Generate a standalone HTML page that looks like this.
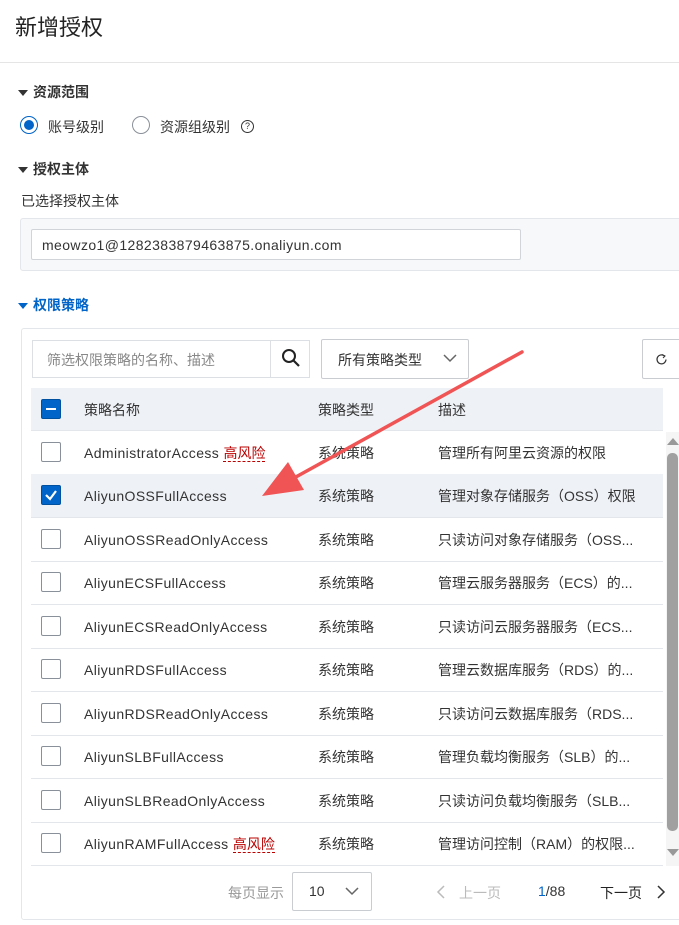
<!DOCTYPE html>
<html><head><meta charset="utf-8"><style>
*{box-sizing:border-box;margin:0;padding:0}
body{width:679px;height:925px;overflow:hidden;background:#fff;font-family:"Liberation Sans","Noto Sans CJK SC",sans-serif;color:#333;position:relative;font-size:14px}
.a{position:absolute}
.sec{font-weight:bold;font-size:14px;color:#333}
.tri{display:inline-block;width:0;height:0;border-left:5px solid transparent;border-right:5px solid transparent;border-top:6px solid #333;margin-right:5px;vertical-align:middle}
.row{position:absolute;left:31px;width:632px;height:44px;border-bottom:1px solid #e3e6ea;font-size:14px;color:#333}
.row span{position:absolute;top:12px;line-height:20px}
.en{letter-spacing:0.4px}
.cb{position:absolute;left:10px;top:11px;width:20px;height:20px;border:1px solid #8a9099;border-radius:2px;background:#fff}
.risk{color:#b00;border-bottom:1px dashed #b00;font-weight:normal;letter-spacing:0}
</style></head><body>
<div class="a" style="left:15px;top:10px;font-size:22px;color:#222">新增授权</div>
<div class="a" style="left:0;top:62px;width:679px;height:1px;background:#e5e5e5"></div>

<div class="a sec" style="left:18px;top:82px"><span class="tri"></span>资源范围</div>
<div class="a" style="left:20px;top:116px;width:18px;height:18px;border:1px solid #0064c8;border-radius:50%"><div style="margin:3px;width:10px;height:10px;border-radius:50%;background:#0064c8"></div></div>
<div class="a" style="left:48px;top:117px">账号级别</div>
<div class="a" style="left:132px;top:116px;width:18px;height:18px;border:1px solid #8a9099;border-radius:50%"></div>
<div class="a" style="left:160px;top:117px">资源组级别</div>
<div class="a" style="left:241px;top:120px;width:13px;height:13px;border:1px solid #333;border-radius:50%;font-size:9px;text-align:center;line-height:11px">?</div>

<div class="a sec" style="left:18px;top:159px"><span class="tri"></span>授权主体</div>
<div class="a" style="left:21px;top:191px">已选择授权主体</div>
<div class="a" style="left:20px;top:218px;width:670px;height:53px;background:#f6f8fa;border:1px solid #e3e6ea;border-radius:3px"></div>
<div class="a en" style="left:31px;top:229px;width:490px;height:31px;background:#fff;border:1px solid #d1d5da;border-radius:2px;padding:7px 10px;font-size:14px">meowzo1@1282383879463875.onaliyun.com</div>

<div class="a sec" style="left:18px;top:295px;color:#0064c8"><span class="tri" style="border-top-color:#0064c8"></span>权限策略</div>

<div class="a" style="left:21px;top:328px;width:670px;height:592px;border:1px solid #e3e6ea;border-radius:3px"></div>
<div class="a" style="left:32px;top:340px;width:278px;height:38px;border:1px solid #dcdfe3"></div>
<div class="a" style="left:47px;top:350px;color:#888">筛选权限策略的名称、描述</div>
<div class="a" style="left:270px;top:340px;width:1px;height:38px;background:#dcdfe3"></div>
<svg class="a" style="left:281px;top:348px" width="20" height="20" viewBox="0 0 20 20"><circle cx="8" cy="8" r="6" fill="none" stroke="#222" stroke-width="2"/><line x1="12.5" y1="12.5" x2="18" y2="18" stroke="#222" stroke-width="2.2"/></svg>
<div class="a" style="left:321px;top:339px;width:148px;height:40px;border:1px solid #c9cdd2;border-radius:2px"></div>
<div class="a" style="left:338px;top:350px">所有策略类型</div>
<svg class="a" style="left:442px;top:352px" width="16" height="12"><polyline points="2,3 8,9 14,3" fill="none" stroke="#666" stroke-width="1.5"/></svg>
<div class="a" style="left:642px;top:339px;width:50px;height:40px;border:1px solid #c9cdd2;border-radius:2px"></div>
<svg class="a" style="left:655px;top:353px" width="13" height="13"><path d="M9.5 3 A4.5 4.5 0 1 0 11 6.5" fill="none" stroke="#333" stroke-width="1.2"/><path d="M7 1.5 L10 3 L8 5" fill="none" stroke="#333" stroke-width="1"/></svg>

<div class="row" style="top:388px;height:43px;background:#eef1f6">
<div class="cb" style="background:#0064c8;border-color:#0050a0"><div style="position:absolute;left:4px;top:8px;width:10px;height:2px;background:#fff"></div></div>
<span style="left:53px">策略名称</span><span style="left:287px">策略类型</span><span style="left:407px">描述</span></div>

<div class="row" style="top:431px"><div class="cb"></div><span class="en" style="left:53px">AdministratorAccess <b class="risk">高风险</b></span><span style="left:287px">系统策略</span><span style="left:407px">管理所有阿里云资源的权限</span></div>
<div class="row" style="top:474px;background:#eef1f6"><div class="cb" style="background:#0064c8;border-color:#0050a0"><svg width="18" height="18" style="position:absolute;left:0;top:0"><polyline points="4,9 8,13 14,5" fill="none" stroke="#fff" stroke-width="2.2"/></svg></div><span class="en" style="left:53px">AliyunOSSFullAccess</span><span style="left:287px">系统策略</span><span style="left:407px">管理对象存储服务（OSS）权限</span></div>
<div class="row" style="top:518px"><div class="cb"></div><span class="en" style="left:53px">AliyunOSSReadOnlyAccess</span><span style="left:287px">系统策略</span><span style="left:407px">只读访问对象存储服务（OSS...</span></div>
<div class="row" style="top:561px"><div class="cb"></div><span class="en" style="left:53px">AliyunECSFullAccess</span><span style="left:287px">系统策略</span><span style="left:407px">管理云服务器服务（ECS）的...</span></div>
<div class="row" style="top:605px"><div class="cb"></div><span class="en" style="left:53px">AliyunECSReadOnlyAccess</span><span style="left:287px">系统策略</span><span style="left:407px">只读访问云服务器服务（ECS...</span></div>
<div class="row" style="top:648px"><div class="cb"></div><span class="en" style="left:53px">AliyunRDSFullAccess</span><span style="left:287px">系统策略</span><span style="left:407px">管理云数据库服务（RDS）的...</span></div>
<div class="row" style="top:692px"><div class="cb"></div><span class="en" style="left:53px">AliyunRDSReadOnlyAccess</span><span style="left:287px">系统策略</span><span style="left:407px">只读访问云数据库服务（RDS...</span></div>
<div class="row" style="top:735px"><div class="cb"></div><span class="en" style="left:53px">AliyunSLBFullAccess</span><span style="left:287px">系统策略</span><span style="left:407px">管理负载均衡服务（SLB）的...</span></div>
<div class="row" style="top:779px"><div class="cb"></div><span class="en" style="left:53px">AliyunSLBReadOnlyAccess</span><span style="left:287px">系统策略</span><span style="left:407px">只读访问负载均衡服务（SLB...</span></div>
<div class="row" style="top:822px"><div class="cb"></div><span class="en" style="left:53px">AliyunRAMFullAccess <b class="risk">高风险</b></span><span style="left:287px">系统策略</span><span style="left:407px">管理访问控制（RAM）的权限...</span></div>

<div class="a" style="left:666px;top:432px;width:13px;height:434px;background:#f5f5f5"></div>
<div class="a" style="left:667px;top:438px;width:0;height:0;border-left:6px solid transparent;border-right:6px solid transparent;border-bottom:7px solid #999"></div>
<div class="a" style="left:667px;top:453px;width:11px;height:378px;background:#a0a0a0;border-radius:5px"></div>
<div class="a" style="left:667px;top:849px;width:0;height:0;border-left:6px solid transparent;border-right:6px solid transparent;border-top:7px solid #999"></div>

<div class="a" style="left:228px;top:883px;color:#999">每页显示</div>
<div class="a" style="left:292px;top:872px;width:80px;height:39px;border:1px solid #c9cdd2;border-radius:2px"></div>
<div class="a" style="left:309px;top:883px">10</div>
<svg class="a" style="left:344px;top:885px" width="16" height="12"><polyline points="2,3 8,9 14,3" fill="none" stroke="#666" stroke-width="1.5"/></svg>
<svg class="a" style="left:436px;top:884px" width="10" height="16"><polyline points="8,2 2,8 8,14" fill="none" stroke="#bbb" stroke-width="1.5"/></svg>
<div class="a" style="left:459px;top:883px;color:#bbb">上一页</div>
<div class="a" style="left:538px;top:883px"><span style="color:#0064c8">1</span>/88</div>
<div class="a" style="left:600px;top:883px;color:#222">下一页</div>
<svg class="a" style="left:656px;top:884px" width="10" height="16"><polyline points="2,2 8,8 2,14" fill="none" stroke="#333" stroke-width="1.5"/></svg>

<svg class="a" style="left:0;top:0" width="679" height="925"><line x1="522" y1="352" x2="285" y2="483" stroke="#f05454" stroke-width="3.5" stroke-linecap="round"/><polygon points="262,496 288,462 304,490" fill="#f05454"/></svg>
</body></html>
